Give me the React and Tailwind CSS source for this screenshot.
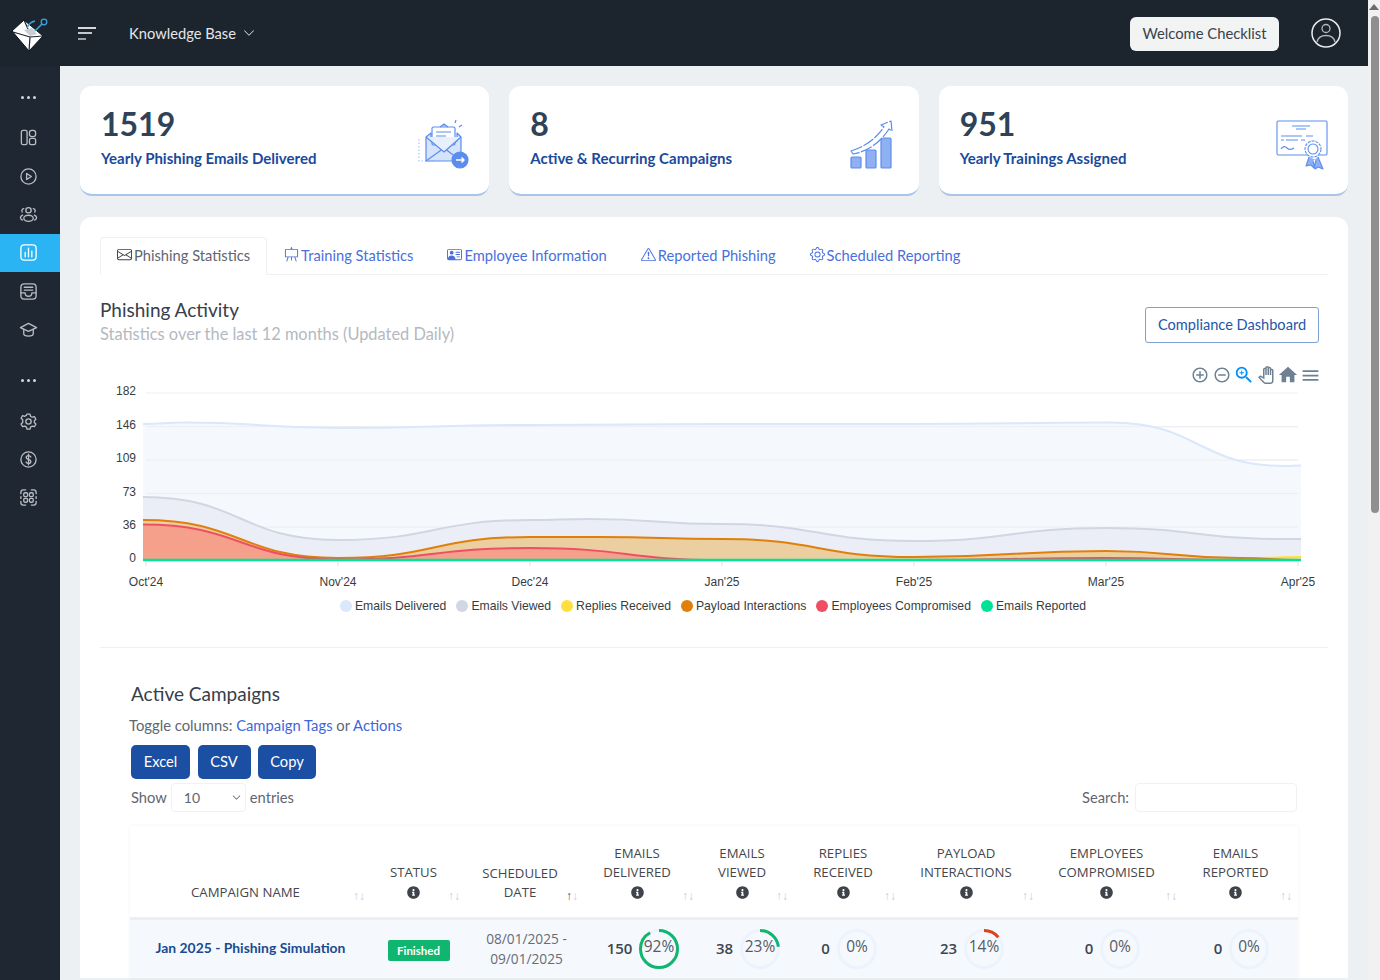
import React from "react";
import {
  BsEnvelope,
  BsEasel,
  BsPersonVcard,
  BsExclamationTriangle,
  BsGear,
  BsChevronDown,
} from "react-icons/bs";
import { FaInfoCircle } from "react-icons/fa";
import {
  MdAddCircleOutline,
  MdRemoveCircleOutline,
  MdZoomIn,
  MdOutlinePanTool,
  MdHome,
  MdMenu,
} from "react-icons/md";

const bodyFont = "font-['Lato','Noto_Sans',sans-serif]";

// ---------- Sidebar icons ----------
const Ico = ({ children }) => (
  <svg width="19" height="19" viewBox="0 0 20 20" fill="none" stroke="currentColor" strokeWidth="1.4" strokeLinecap="round" strokeLinejoin="round">
    {children}
  </svg>
);

const sideIcons = {
  layout: (
    <Ico>
      <rect x="2.5" y="2.5" width="6" height="15" rx="1.8" />
      <rect x="11" y="2.5" width="6.5" height="6.5" rx="2.5" />
      <rect x="11" y="11" width="6.5" height="6.5" rx="1.8" />
    </Ico>
  ),
  play: (
    <Ico>
      <circle cx="10" cy="10" r="8" />
      <path d="M8 6.8v6.4l5-3.2z" />
    </Ico>
  ),
  people: (
    <Ico>
      <circle cx="10" cy="5.5" r="2.8" />
      <ellipse cx="10" cy="14" rx="5" ry="3.2" />
      <path d="M5 3.8a2.3 2.3 0 0 0-1.6 3.6M15 3.8a2.3 2.3 0 0 1 1.6 3.6M3.8 10.6C2.4 11.2 1.5 12.3 1.5 13.4s.9 2 2.2 2.5M16.2 10.6c1.4.6 2.3 1.7 2.3 2.8s-.9 2-2.2 2.5" />
    </Ico>
  ),
  chart: (
    <Ico>
      <rect x="2" y="2" width="16" height="16" rx="3.5" />
      <path d="M6.5 10v4.5M10 5.5v9M13.5 8.5v6" />
    </Ico>
  ),
  inbox: (
    <Ico>
      <rect x="2" y="2" width="16" height="16" rx="3.5" />
      <path d="M5.5 5.5h9M5.5 8.5h9M2 11.5h4.5a3.5 3.5 0 0 0 7 0H18" />
    </Ico>
  ),
  cap: (
    <Ico>
      <path d="M10 3.5 18.5 8 10 12 1.5 8z" />
      <path d="M5 10v4.5c0 1.5 2.5 2.5 5 2.5s5-1 5-2.5V10" />
    </Ico>
  ),
  gear: (
    <Ico>
      <circle cx="10" cy="10" r="2.8" />
      <path d="M8.4 2.2h3.2l.6 2.3 1.7 1 2.3-.7 1.6 2.8-1.7 1.6v1.9l1.7 1.6-1.6 2.8-2.3-.7-1.7 1-.6 2.3H8.4l-.6-2.3-1.7-1-2.3.7-1.6-2.8 1.7-1.6V8.2L2.200 6.600l1.600-2.800 2.300.700 1.700-1z" />
    </Ico>
  ),
  dollar: (
    <Ico>
      <circle cx="10" cy="10" r="8" />
      <path d="M12.500 7.300C12 6.300 11 6 10 6c-1.400 0-2.500.8-2.500 2s1.100 1.700 2.500 2 2.500.8 2.500 2-1.100 2-2.500 2c-1 0-2-.4-2.500-1.300M10 4.500v11" />
    </Ico>
  ),
  apps: (
    <Ico>
      <rect x="5" y="5" width="4" height="4" rx="1.200" />
      <rect x="11" y="5" width="4" height="4" rx="1.200" />
      <rect x="5" y="11" width="4" height="4" rx="1.200" />
      <rect x="11" y="11" width="4" height="4" rx="1.200" />
      <path d="M2 6V4.500A2.500 2.500 0 0 1 4.500 2H7M13 2h2.500A2.500 2.500 0 0 1 18 4.500V6M18 14v1.500a2.500 2.500 0 0 1-2.500 2.500H13M7 18H4.500A2.500 2.500 0 0 1 2 15.500V14M2 9v2M18 9v2" />
    </Ico>
  ),
};

const Logo = () => (
  <svg width="42" height="40" viewBox="9 14 42 40" fill="none">
    <path d="M12 32 24 21l19 16-14 15z" fill="#fff" stroke="#0d1116" strokeWidth="1" />
    <path d="M13 33l17 5 13-1M30 38l-1 14M24 21l4 9" stroke="#1c242e" strokeWidth="1.200" />
    <path d="M24 31l8-2 5 6-7 2z" fill="#c9ced4" />
    <path d="M27 29c1-3 4-6 8-7" stroke="#3aa4dd" strokeWidth="1.600" />
    <path d="M35 32l7-7" stroke="#3aa4dd" strokeWidth="1.600" />
    <circle cx="44" cy="23" r="2.800" stroke="#3aa4dd" strokeWidth="1.300" />
  </svg>
);

// ---------- Card illustrations ----------
const MailArt = () => (
  <svg width="52" height="50" viewBox="0 0 52 50" fill="none" stroke="#5b8def" strokeWidth="1.200" strokeLinejoin="round" className="mt-[9px]">
    <path d="M2 19v22h16" stroke="#a9c3f5" strokeDasharray="1.500 2" />
    <path d="M9 17 14 13V21h26v-8l4 4v24H9z" fill="#d5e3fb" />
    <path d="M9 41 27 28 44 41" />
    <rect x="15" y="7" width="23" height="18" rx="1.500" fill="#fff" />
    <path d="M23 7l4-3 4 3" fill="#9dbcf5" />
    <path d="M19 12h15M19 16h10" />
    <path d="M9 17l18 15 17-15" fill="#e8f0fd" />
    <path d="M38 3l1-3M42 7l3-2" />
    <circle cx="43" cy="40" r="8" fill="#5b8def" />
    <path d="M39 40h8M44.500 37.500l2.500 2.500-2.500 2.500" stroke="#fff" strokeWidth="1.500" />
  </svg>
);

const GrowthArt = () => (
  <svg width="44" height="52" viewBox="0 0 44 52" fill="none" stroke="#5b8def" strokeWidth="1.200" strokeLinejoin="round" className="mr-[5px] mt-[8px]">
    <rect x="1" y="39" width="10" height="11" rx="1" fill="#8fb0f3" />
    <rect x="16" y="32" width="10" height="18" rx="1" fill="#8fb0f3" />
    <rect x="31" y="20" width="10" height="30" rx="1" fill="#8fb0f3" />
    <path d="M1 33C14 29 25 22 34 9l-3-2 10-4 1 10-3-2C30 25 18 33 3 36z" fill="#fff" strokeDasharray="12 1.500" />
  </svg>
);

const CertArt = () => (
  <svg width="52" height="50" viewBox="0 0 52 50" fill="none" stroke="#5b8def" strokeWidth="1.100" strokeLinejoin="round" className="mt-[9px]">
    <rect x="1" y="1" width="50" height="34" rx="1.500" fill="#fff" />
    <path d="M16 6h18M20 9h10M5 16h21M30 16h7M5 20h3M10 20h12M25 20h4" />
    <path d="M5 29c2-3 4-3 6-1s4 2 7 0" />
    <path d="M33 37l-3 9 5-1 3 3 2-8M42 37l5 12-5-2-3 2-2-8" fill="#8fb0f3" />
    <circle cx="37" cy="29" r="8" fill="#fff" strokeDasharray="3 1" />
    <circle cx="37" cy="29" r="5" fill="#fff" />
  </svg>
);

const stats = [
  { value: "1519", label: "Yearly Phishing Emails Delivered", art: <MailArt /> },
  { value: "8", label: "Active & Recurring Campaigns", art: <GrowthArt /> },
  { value: "951", label: "Yearly Trainings Assigned", art: <CertArt /> },
];

const tabs = [
  { label: "Phishing Statistics", Icon: BsEnvelope, active: true },
  { label: "Training Statistics", Icon: BsEasel },
  { label: "Employee Information", Icon: BsPersonVcard },
  { label: "Reported Phishing", Icon: BsExclamationTriangle },
  { label: "Scheduled Reporting", Icon: BsGear },
];

// ---------- Chart ----------
const curve = (pts) => {
  let d = `M${pts[0][0]} ${pts[0][1]}`;
  for (let i = 1; i < pts.length; i++) {
    const [x0, y0] = pts[i - 1];
    const [x1, y1] = pts[i];
    const mid = (x0 + x1) / 2;
    d += ` C${mid} ${y0} ${mid} ${y1} ${x1} ${y1}`;
  }
  return d;
};

const area = (pts) => `${curve(pts)} L1301 560 L143 560 Z`;

const delivered = [[143, 424], [185, 422.500], [338, 428], [530, 425], [722, 424], [914, 424], [1111, 422.500], [1285, 466], [1301, 465.500]];
const viewed = [[143, 497], [338, 540], [530, 520], [590, 519], [722, 524], [914, 541], [1106, 528], [1285, 539], [1301, 539]];
const replies = [[143, 523], [338, 559], [530, 538], [722, 540], [914, 558], [1106, 552], [1240, 558.500], [1301, 557]];
const payload = [[143, 520], [338, 558], [530, 537], [600, 537], [722, 539], [914, 557], [1106, 551], [1240, 558], [1301, 560]];
const compromised = [[143, 524.500], [338, 559.500], [530, 548], [722, 560], [914, 560], [1106, 558], [1240, 560], [1301, 560]];

const yTicks = [[182, 393], [146, 426.700], [109, 460], [73, 493.700], [36, 527], [0, 560]];
const xTicks = [["Oct'24", 146], ["Nov'24", 338], ["Dec'24", 530], ["Jan'25", 722], ["Feb'25", 914], ["Mar'25", 1106], ["Apr'25", 1298]];

const legend = [
  ["Emails Delivered", "bg-[#dbe7fb]"],
  ["Emails Viewed", "bg-[#d1d6e2]"],
  ["Replies Received", "bg-[#ffdf40]"],
  ["Payload Interactions", "bg-[#e07f0a]"],
  ["Employees Compromised", "bg-[#ef4f64]"],
  ["Emails Reported", "bg-[#00e396]"],
];

const Chart = () => (
  <svg width="1228" height="228" viewBox="100 368 1228 228" className="block" fontFamily="'Liberation Sans', Arial, sans-serif" fontSize="12" fill="#373d3f">
    {yTicks.map(([v, y]) => (
      <g key={v}>
        <line x1="146" x2="1298" y1={y} y2={y} stroke="#eceef1" />
        <text x="136" y={y + 2} textAnchor="end">{v}</text>
      </g>
    ))}
    <path d={area(delivered)} fill="#f5f9fe" />
    {yTicks.slice(1, -1).map(([v, y]) => (
      <line key={v} x1="146" x2="1298" y1={y} y2={y} stroke="#eceef1" />
    ))}
    <path d={curve(delivered)} stroke="#dbe7fb" strokeWidth="2" fill="none" />
    <path d={area(viewed)} fill="#ebeef7" />
    <path d={curve(viewed)} stroke="#d1d6e2" strokeWidth="2" fill="none" />
    <path d={area(replies)} fill="#f6e9b0" />
    <path d={curve(replies)} stroke="#ffdf40" strokeWidth="2" fill="none" />
    <path d={area(payload)} fill="#ebcfa0" />
    <path d={curve(payload)} stroke="#e07f0a" strokeWidth="2" fill="none" />
    <path d={area(compromised)} fill="#f5a08a" />
    <path d={curve(compromised)} stroke="#ef4f64" strokeWidth="2" fill="none" />
    <line x1="143" x2="1301" y1="560" y2="560" stroke="#00e396" strokeWidth="2.500" />
    {xTicks.map(([t, x]) => (
      <g key={t}>
        <line x1={x} x2={x} y1="561" y2="566" stroke="#e0e0e0" />
        <text x={x} y="586" textAnchor="middle">{t}</text>
      </g>
    ))}
  </svg>
);

// ---------- Table ----------
const columns = [
  { w: "w-[241px]", lines: ["Campaign Name"] },
  { w: "w-[95px]", lines: ["Status"], info: true },
  { w: "w-[118px]", lines: ["Scheduled", "Date"], sorted: true },
  { w: "w-[116px]", lines: ["Emails", "Delivered"], info: true },
  { w: "w-[94px]", lines: ["Emails", "Viewed"], info: true },
  { w: "w-[108px]", lines: ["Replies", "Received"], info: true },
  { w: "w-[138px]", lines: ["Payload", "Interactions"], info: true },
  { w: "w-[143px]", lines: ["Employees", "Compromised"], info: true },
  { w: "w-[115px]", lines: ["Emails", "Reported"], info: true },
];

const Ring = ({ pct, color }) => (
  <svg width="42" height="42" viewBox="0 0 42 42" fill="none" className="shrink-0">
    <circle cx="21" cy="21" r="18.500" stroke="#edf3fc" strokeWidth="3" />
    {pct > 0 && (
      <circle
        cx="21"
        cy="21"
        r="18.500"
        stroke={color}
        strokeWidth="3"
        pathLength="100"
        strokeDasharray={`${pct} 100`}
        transform="rotate(-90 21 21)"
      />
    )}
    <text x="21" y="24" textAnchor="middle" fontSize="15.500" fill="#555b63" stroke="none">{pct}%</text>
  </svg>
);

const Metric = ({ value, pct, color }) => (
  <td className="py-2 pl-[3px]">
    <div className="flex items-center justify-center gap-[6px]">
      <span className="text-[15px] font-semibold text-[#3f4650]">{value}</span>
      <Ring pct={pct} color={color} />
    </div>
  </td>
);

function Dots() {
  return (
    <span className="flex gap-[3px]">
      <span className="h-[3px] w-[3px] rounded-full bg-current" />
      <span className="h-[3px] w-[3px] rounded-full bg-current" />
      <span className="h-[3px] w-[3px] rounded-full bg-current" />
    </span>
  );
}

export default function App() {
  return (
    <div className={`flex h-[980px] w-[1380px] overflow-hidden bg-[#f1f1f1] ${bodyFont}`}>
      <div className="flex w-[1368px] flex-col">
        {/* top bar */}
        <header className="flex h-[66px] shrink-0 items-center bg-[#1c242e] pr-[27px]">
          <div className="ml-[9px] w-[69px]">
            <Logo />
          </div>
          <div className="flex w-[51px] flex-col gap-[3.500px]">
            <span className="block h-[2px] w-[18px] bg-[#d5d8dc]" />
            <span className="block h-[2px] w-[14px] bg-[#c5c9ce]" />
            <span className="block h-[2px] w-[8px] bg-[#9aa0a7]" />
          </div>
          <button className="flex items-center gap-[7px] text-[14.700px] text-[#e4e6e9]">
            Knowledge Base <BsChevronDown className="text-[12px]" />
          </button>
          <button className="ml-auto mt-[1px] h-[34px] w-[149px] rounded-md bg-[#f2f3f3] text-[14.800px] text-[#3a424c]">
            Welcome Checklist
          </button>
          <svg className="ml-[32px]" width="30" height="30" viewBox="0 0 30 30" fill="none" stroke="#e9ebee" strokeWidth="1.500">
            <circle cx="15" cy="15" r="14" />
            <circle cx="15" cy="10.500" r="4" strokeWidth="1.300" stroke="#b5b9be" />
            <path d="M6 24c1-4.500 4.500-6.500 9-6.500s8 2 9 6.500" strokeWidth="1.300" stroke="#b5b9be" />
          </svg>
        </header>

        <div className="flex min-h-0 flex-1">
          {/* sidebar */}
          <aside className="w-[60px] shrink-0 bg-[#1f2732] pr-[4px] text-[#b9bdc3]">
            <div className="flex h-[52.500px] items-center justify-center pt-[10px] text-[#d5d8dc]">
              <Dots />
            </div>
            {["layout", "play", "people", "chart", "inbox", "cap"].map((k) => (
              <div
                key={k}
                className={`flex h-[38.400px] items-center justify-center ${k === "chart" ? "-mr-[4px] bg-[#2ab4f4] pr-[4px] text-white" : ""}`}
              >
                {sideIcons[k]}
              </div>
            ))}
            <div className="flex h-[53px] items-center justify-center pt-[10px] text-[#d5d8dc]">
              <Dots />
            </div>
            {["gear", "dollar", "apps"].map((k) => (
              <div key={k} className="flex h-[38.400px] items-center justify-center">
                {sideIcons[k]}
              </div>
            ))}
          </aside>

          {/* main */}
          <main className="min-w-0 flex-1 bg-[#ecf0f3] px-5 pt-5">
            <div className="grid grid-cols-3 gap-5">
              {stats.map((s) => (
                <div
                  key={s.label}
                  className="flex h-[110px] items-center justify-between rounded-xl border-b-2 border-[#a9c5ec] bg-white pl-[21px] pr-[20px]"
                >
                  <div className="pb-[8px]">
                    <div className="text-[32px] font-bold leading-[40px] text-[#2f4358]">{s.value}</div>
                    <div className="mt-[3px] text-[15px] font-bold leading-[22px] text-[#1a4a9c]">{s.label}</div>
                  </div>
                  {s.art}
                </div>
              ))}
            </div>

            <section className="mt-[21px] rounded-t-xl bg-white px-5 pt-5">
              {/* tabs */}
              <div className="flex h-[38px] border-b border-[#eef0f2]">
                {tabs.map(({ label, Icon, active }) => (
                  <button
                    key={label}
                    className={`flex h-[38px] items-center gap-[2px] pb-[2px] text-[14.700px] ${
                      active
                        ? "rounded-t border border-b-white border-[#eef0f2] px-[16px] text-[#5f6670]"
                        : "px-[17px] text-[#4a6fdc]"
                    }`}
                  >
                    <Icon className={`-mt-[2px] text-[15px] ${active ? "text-[#3a424c]" : ""}`} />
                    {label}
                  </button>
                ))}
              </div>

              {/* chart heading */}
              <div className="mt-[23px] flex h-[48px] items-center justify-between pr-[9px]">
                <div>
                  <h2 className="text-[19px] leading-[24px] text-[#35404c]">Phishing Activity</h2>
                  <p className="text-[16.400px] leading-[24px] text-[#b4b9bf]">Statistics over the last 12 months (Updated Daily)</p>
                </div>
                <button className="mt-[6px] h-[36px] w-[174px] rounded-[3px] border border-[#7ea1d6] text-[14.600px] text-[#1f56a8]">
                  Compliance Dashboard
                </button>
              </div>

              <div className="relative mt-[22px]">
                <Chart />
                <div className="absolute right-[7px] top-[-4px] flex items-center text-[#6e8192]">
                  <span className="flex w-[22px] justify-center"><MdAddCircleOutline className="text-[18px]" /></span>
                  <span className="flex w-[22px] justify-center"><MdRemoveCircleOutline className="text-[18px]" /></span>
                  <span className="flex w-[22px] justify-center"><MdZoomIn className="text-[22px] text-[#008ffb]" /></span>
                  <span className="flex w-[22px] justify-center"><MdOutlinePanTool className="text-[18px]" /></span>
                  <span className="flex w-[22px] justify-center"><MdHome className="text-[22px]" /></span>
                  <span className="flex w-[22px] justify-center"><MdMenu className="text-[21px]" /></span>
                </div>
              </div>

              {/* legend */}
              <div className="flex h-[20px] items-center justify-center gap-[10px] pr-[2px] font-['Liberation_Sans',Arial,sans-serif] text-[12.200px] text-[#373d3f]">
                {legend.map(([name, dot]) => (
                  <span key={name} className="flex items-center gap-[3px]">
                    <span className={`h-[12px] w-[12px] rounded-full ${dot}`} />
                    {name}
                  </span>
                ))}
              </div>

              <div className="mt-[31px] border-t border-[#eef0f2] px-[30px] pt-[33px]">
                <h3 className="ml-[1px] text-[19px] leading-[26px] text-[#35404c]">Active Campaigns</h3>
                <p className="-ml-[1px] mt-[7px] text-[14.800px] leading-[22px] text-[#5f6670]">
                  Toggle columns: <a className="text-[#3f66d8]">Campaign Tags</a> or <a className="text-[#3f66d8]">Actions</a>
                </p>
                <div className="ml-[1px] mt-[9px] flex gap-[7.500px]">
                  <button className="h-[34px] w-[59px] rounded-[5px] bg-[#1a4fa3] pb-[1px] text-[14.700px] text-white">Excel</button>
                  <button className="h-[34px] w-[53px] rounded-[5px] bg-[#1a4fa3] pb-[1px] text-[14.700px] text-white">CSV</button>
                  <button className="h-[34px] w-[58px] rounded-[5px] bg-[#1a4fa3] pb-[1px] text-[14.700px] text-white">Copy</button>
                </div>
                <div className="ml-[1px] mt-[4px] flex h-[29px] items-center text-[14.700px] text-[#5f6670]">
                  Show
                  <div className="mx-[4px] flex h-[29px] w-[75px] items-center justify-between rounded-sm border border-[#f0f1f3] pl-[12px] pr-[4px] text-[14px]">
                    10 <BsChevronDown className="text-[9px] text-[#3a424c]" />
                  </div>
                  entries
                  <span className="ml-auto mr-[6px]">Search:</span>
                  <div className="mr-[1px] h-[29px] w-[162px] rounded-sm border border-[#f0f1f3]" />
                </div>

                {/* campaigns table */}
                <table className="mt-[14px] w-[1168px] table-fixed border-collapse font-['Open_Sans','Noto_Sans',sans-serif] shadow-[0_0_4px_rgba(0,0,0,0.05)]">
                  <colgroup>
                    {columns.map((c, i) => (
                      <col key={i} className={c.w} />
                    ))}
                  </colgroup>
                  <thead>
                    <tr className="border-b-[3px] border-[#eceef1]">
                      {columns.map((c) => (
                        <th
                          key={c.lines[0] + c.lines[1]}
                          className={`relative h-[92px] pl-[10px] pr-[20px] text-center align-bottom text-[13.200px] font-normal uppercase leading-[19.500px] text-[#43474d] ${c.info ? "pb-[18px]" : "pb-[14px]"}`}
                        >
                          {c.lines.map((l) => (
                            <div key={l}>{l}</div>
                          ))}
                          {c.info && <FaInfoCircle className="mx-auto mt-[3px] text-[13px] text-[#3f444a]" />}
                          <span className="absolute bottom-[15px] right-[6px] text-[12px] leading-none text-[#c9cdd2]">
                            <span className={c.sorted ? "text-[#4a4f55]" : ""}>↑</span>↓
                          </span>
                        </th>
                      ))}
                    </tr>
                  </thead>
                  <tbody>
                    <tr className="bg-[#f5f9fe]">
                      <td className={`text-center text-[13.900px] font-bold text-[#1a4a8f] ${bodyFont}`}>Jan 2025 - Phishing Simulation</td>
                      <td className="text-center">
                        <span className={`inline-block h-[21px] w-[62px] rounded-[2px] bg-[#10b56f] text-[11.500px] font-bold leading-[21px] text-white ${bodyFont}`}>
                          Finished
                        </span>
                      </td>
                      <td className="pl-[3px] text-center text-[13.700px] leading-[20px] text-[#666c74]">
                        08/01/2025 -<br />09/01/2025
                      </td>
                      <Metric value="150" pct={92} color="#10b56f" />
                      <Metric value="38" pct={23} color="#10b56f" />
                      <Metric value="0" pct={0} />
                      <Metric value="23" pct={14} color="#d9431e" />
                      <Metric value="0" pct={0} />
                      <Metric value="0" pct={0} />
                    </tr>
                  </tbody>
                </table>
              </div>
            </section>
          </main>
        </div>
      </div>

      {/* page scrollbar */}
      <div className="flex w-3 flex-col items-center pt-[4px]">
        <span className="h-0 w-0 border-x-[5px] border-b-[6px] border-x-transparent border-b-[#6b6b6b]" />
        <span className="ml-[2px] mt-[6px] h-[497px] w-[8px] rounded-full bg-[#8f8f8f]" />
      </div>
    </div>
  );
}
